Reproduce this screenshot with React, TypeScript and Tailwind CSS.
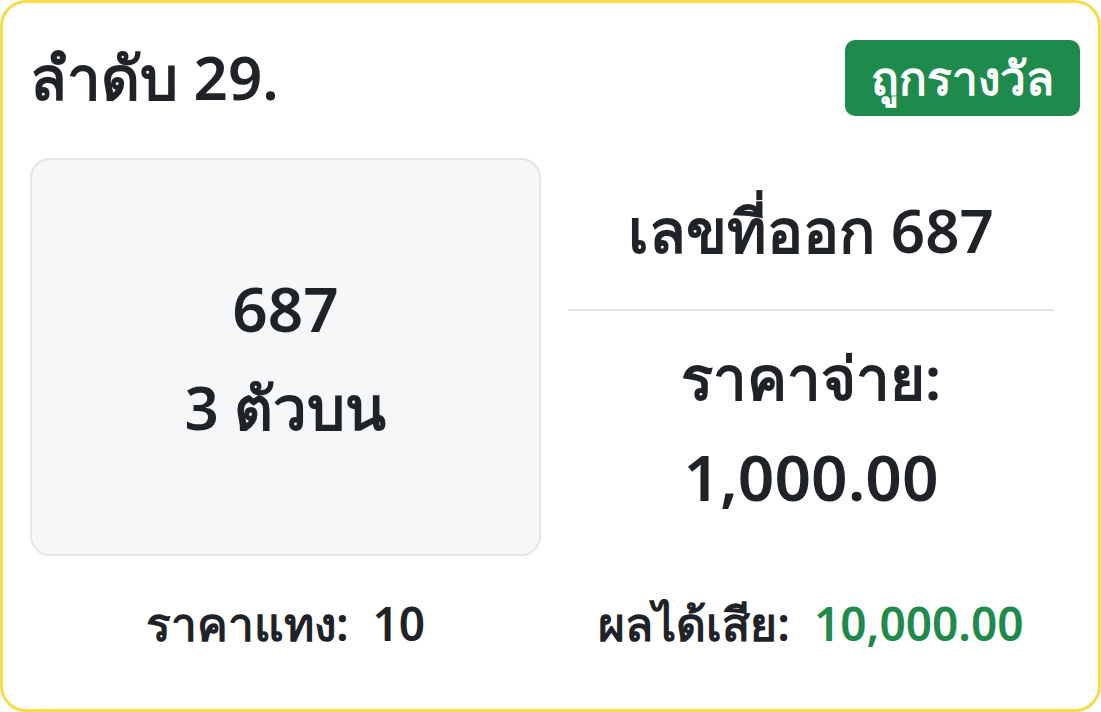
const font = { fontFamily: '"Noto Sans", "Open Sans", sans-serif' };

export default function App() {
  return (
    <div className="h-[712px] w-[1101px] bg-white" style={font}>
      <div className="flex h-full w-full flex-col rounded-[26px] border-[3px] border-[#f5dc4a] pl-[27px] pr-[18px] pt-[37px]">
        <div className="flex items-start justify-between">
          <h1 className="mt-[7px] text-[60px] font-semibold leading-none text-[#1f2328]">ลำดับ 29.</h1>
          <span className="rounded-[10px] bg-[#1e8a4c] px-[26px] py-[9px] text-[46px] font-semibold leading-tight text-white">
            ถูกรางวัล
          </span>
        </div>

        <div className="mt-[42px] grid grid-cols-[511px_486px] gap-[27px]">
          <div className="flex h-[398px] flex-col items-center justify-center gap-[38px] rounded-[20px] border-2 border-[#e3e5e9] bg-[#f6f7f9] text-[#1f2328]">
            <div className="text-[62px] font-semibold leading-none">687</div>
            <div className="text-[60px] font-semibold leading-none">3 ตัวบน</div>
          </div>
          <div className="flex flex-col items-center text-[#1f2328]">
            <div className="mt-[42px] text-[60px] font-semibold leading-none">เลขที่ออก 687</div>
            <div className="mt-[49px] h-[2px] w-full bg-[#e2e4e8]" />
            <div className="mt-[36px] text-[60px] font-semibold leading-none">ราคาจ่าย:</div>
            <div className="mt-[38px] text-[64px] font-semibold leading-none">1,000.00</div>
          </div>
        </div>

        <div className="mt-[44px] grid grid-cols-[511px_486px] gap-[27px] text-[46px] font-semibold leading-none text-[#1f2328]">
          <div className="text-center">ราคาแทง:&nbsp; 10</div>
          <div className="text-center">
            ผลได้เสีย:&nbsp; <span className="text-[#1e8a4c]">10,000.00</span>
          </div>
        </div>
      </div>
    </div>
  );
}
